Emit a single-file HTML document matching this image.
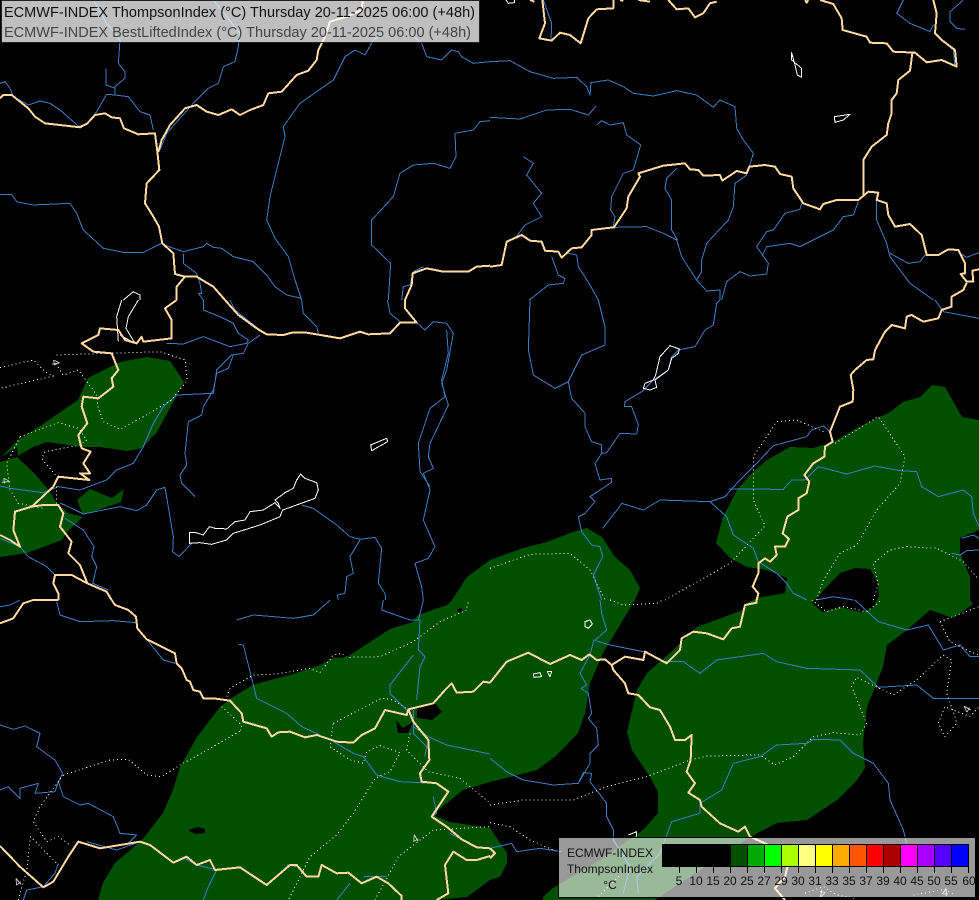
<!DOCTYPE html>
<html><head><meta charset="utf-8"><title>ECMWF-INDEX ThompsonIndex</title>
<style>
html,body{margin:0;padding:0;background:#000;width:979px;height:900px;overflow:hidden}
svg{display:block}
.g polygon{fill:#005000;stroke:none;shape-rendering:crispEdges}
.h polygon{fill:#000;stroke:none;shape-rendering:crispEdges}
polyline,.l polygon{fill:none;vector-effect:non-scaling-stroke;stroke-linejoin:round;shape-rendering:crispEdges}
.r polyline{stroke:#3d7dc4;stroke-width:1}
.d polyline{stroke:#fff;stroke-width:1;stroke-dasharray:1 3}
.b polyline{stroke:#ffd9a0;stroke-width:2}
.l polygon,.l polyline{stroke:#fff;stroke-width:1}
text{font-family:"Liberation Sans",Arial,sans-serif}
.n{font-size:11px;fill:#ddd}
</style></head><body>
<svg width="979" height="900" viewBox="0 0 979 900" xmlns="http://www.w3.org/2000/svg">
<rect width="979" height="900" fill="#000"/>
<g class="g">
<polygon points="98,900 103,883 115,863 142,840 163,813 173,790 180,767 197,737 220,707 233,697 253,685 263,682 290,675 320,665 333,658 347,657 370,642 390,629 413,622 418,615 447,605 452,600 467,577 490,560 523,548 547,542 573,532 587,528 602,537 615,557 630,570 640,588 635,600 617,630 603,653 590,683 585,713 578,733 557,755 537,770 510,777 490,782 463,790 447,803 433,815 450,822 490,828 507,853 507,863 500,877 490,880 467,897 437,900"/>
<polygon points="716,543 723,517 737,490 753,472 767,460 790,447 813,448 833,442 857,428 890,412 903,402 920,397 932,385 945,387 962,417 979,420 979,530 960,538 960,553 970,577 970,600 973,604 953,618 930,610 907,630 887,645 883,667 867,707 863,743 865,768 857,780 837,800 807,820 777,823 750,837 655,900 543,900 543,897 553,888 600,860 643,830 658,813 658,792 650,777 632,750 627,732 637,690 647,673 670,653 697,627 743,610 747,603 757,598 785,593 787,578 767,570 747,567 730,558"/>
<polygon points="0,458 18,440 40,426 78,400 88,378 120,362 147,357 170,361 184,382 170,408 157,432 142,448 127,451 100,447 82,447 47,442 33,447 18,456 17,447"/>
<polygon points="0,462 17,457 33,472 47,488 57,503 68,513 83,517 67,532 62,540 27,553 0,557"/>
<polygon points="77,500 90,489 112,498 124,489 121,502 83,515"/>
</g>
<g class="h">
<polygon points="812,603 823,591 840,573 855,568 870,569 878,583 879,596 873,608 860,612 840,607 823,612"/>
<polygon points="417,708 435,703 442,712 432,720 417,718"/>
<polygon points="396,720 403,728 413,722 408,733 398,733"/>
<polygon points="188,830 198,827 205,829 205,833 195,834"/>
<polygon points="457,609 462,608 463,612 458,612"/>
</g>
<!-- rivers -->
<g class="r">
<g transform="scale(.33333)">
<polyline points="0,250 15,245 30,265 40,290 85,315 120,303 150,310 180,330 235,378 260,375 290,335 320,283 345,285 385,290 420,335 450,345 460,390"/>
<polyline points="480,450 500,400 580,310 625,265 655,250 670,200 705,185 715,140 720,100 640,0"/>
<polyline points="360,120 355,190 375,215 375,235 345,260 345,285"/>
<polyline points="318,205 318,255 345,265"/>
<polyline points="280,0 320,70 360,120"/>
<polyline points="0,583 35,583 50,605 100,615 210,610 230,640 250,690 310,745 370,757 430,757 485,730"/>
<polyline points="487,733 550,755 610,740 620,730 640,742 665,745 700,770 760,785 800,825 825,860 860,885 905,895"/>
<polyline points="550,760 550,790 590,820 600,850 605,880 595,880 610,900"/>
<polyline points="905,900 885,840 865,770 825,715 800,660 810,590 830,510 855,410 850,380 900,310 1000,240 1035,170 1065,150 1095,165 1120,120 1150,100"/>
<polyline points="1165,900 1172,790 1115,735 1115,660 1180,590 1200,520 1240,495 1300,490 1350,505 1368,470 1365,400 1420,390 1440,365 1470,362"/>
<polyline points="1230,100 1265,130 1280,170 1325,180 1355,150 1375,155 1385,170 1420,190 1470,185"/>
<polyline points="1205,900 1210,860 1230,855 1240,815 1270,800"/>
</g>
<g transform="translate(490,0) scale(.33333)">
<polyline points="0,185 60,182 120,215 190,235 260,232 290,260 300,285 303,248 355,240 400,260 430,280 490,288 560,272 620,285 670,322 690,300 735,320 740,385 760,420 790,460 772,520"/>
<polyline points="0,352 90,357 170,330 240,328 295,345 318,318"/>
<polyline points="320,375 335,362 360,375 400,368 410,405 452,435 430,510 400,520 365,590 362,630 375,650 370,680"/>
<polyline points="100,470 130,490 110,525 155,580 130,610 155,650 105,675 75,715"/>
<polyline points="372,682 470,680 520,700 560,720 575,770 620,840 650,873 690,870 690,900"/>
<polyline points="560,505 530,535 525,565 545,600 545,690 562,720"/>
<polyline points="770,525 735,550 730,620 715,660 650,730 635,780 635,815 620,840"/>
<polyline points="695,900 710,845 750,815 780,828 830,822 835,790 800,740 830,695 850,690 885,640 930,628 935,610"/>
<polyline points="815,770 830,740 900,730 930,740 1030,690 1060,650 1090,645 1105,605"/>
<polyline points="1160,600 1160,660 1190,730 1200,770 1260,850 1330,900"/>
<polyline points="1200,760 1255,790 1290,785 1305,765"/>
<polyline points="1410,760 1430,772 1467,758"/>
<polyline points="185,770 205,825 225,835 220,850 175,855 118,900"/>
<polyline points="235,760 260,765 265,800 300,855 325,900"/>
<polyline points="1240,0 1220,40 1260,70 1320,95 1330,75"/>
<polyline points="1420,0 1380,35 1380,65 1400,85 1425,88"/>
<polyline points="160,0 185,70 183,120"/>
<polyline points="1355,120 1390,150 1395,200"/>
</g>
<g transform="translate(0,300) scale(.33333)">
<polyline points="610,0 610,30 660,50 700,70 715,100 745,120 740,130 690,140 610,110 550,132 500,130"/>
<polyline points="780,105 745,130 730,160 695,165 650,210 640,280 530,285 490,320 460,370 430,440 400,490 350,510 320,540 240,570 175,560 130,578 30,565 0,558"/>
<polyline points="700,165 685,205 650,220 640,270 610,320 605,345 565,365 555,460 560,495 540,525 545,550 585,590"/>
<polyline points="690,0 705,30 780,90"/>
<polyline points="905,0 910,40 950,80 955,100"/>
<polyline points="1162,0 1170,40 1200,65"/>
<polyline points="1250,68 1275,90 1300,65 1340,70 1360,100 1340,210 1325,250 1345,315 1290,430 1285,470 1300,505 1270,520 1290,570 1270,660 1305,740 1285,775 1245,790 1265,860 1270,900"/>
<polyline points="1340,90 1345,160 1325,240 1335,290 1290,325 1255,430 1260,515 1290,560"/>
<polyline points="905,615 940,625 1010,675 1050,710 1080,718 1125,712 1145,745 1135,850 1155,880 1157,900"/>
<polyline points="1080,720 1050,770 1060,820 1040,830 1035,880 1012,885 1015,900"/>
<polyline points="180,610 195,615 250,642 360,620 410,632 440,615 470,570 495,562 520,710 518,755 537,770 575,730"/>
<polyline points="195,655 250,690 282,740 275,770 290,800 278,850 325,870"/>
<polyline points="0,715 60,740 85,770 140,800 165,825"/>
</g>
<g transform="translate(490,300) scale(.33333)">
<polyline points="120,0 115,150 130,225 195,265 235,245 275,165 345,135 345,80 325,0"/>
<polyline points="235,245 245,295 285,340 285,380 305,425 335,435 335,460 315,490 330,540 365,535 365,547 300,590 315,605 285,640 265,650 275,695 305,735 330,740 338,770 310,825 335,900"/>
<polyline points="335,460 350,458 390,400 440,402 445,375 425,320 403,320 405,305 455,275 490,240 535,210 545,170 565,150 615,140 645,90 670,75 680,10 690,0"/>
<polyline points="338,685 385,625 395,610 460,630 510,600 660,605 705,590 745,545 800,490 850,437 950,410 965,390 1000,378 1020,395"/>
<polyline points="660,605 710,650 730,705 790,745 805,785 860,820 890,850 910,880 950,900"/>
<polyline points="715,567 880,568 905,540 945,540 985,500 1070,522 1155,498 1230,512 1280,515 1295,560 1345,590 1420,570 1445,590 1450,640 1467,680"/>
<polyline points="1415,715 1450,705 1467,715"/>
<polyline points="1385,760 1410,765 1430,752 1467,750"/>
<polyline points="1335,0 1360,35 1467,55"/>
<polyline points="980,900 1030,890 1090,900"/>
</g>
<g transform="translate(0,600) scale(.33333)">
<polyline points="0,20 30,15 60,0"/>
<polyline points="170,5 180,45 240,65 340,62 408,68"/>
<polyline points="440,118 490,180 525,190"/>
<polyline points="710,60 760,45 880,55 940,45 985,5 990,0"/>
<polyline points="715,133 730,135 745,195 770,295 820,320 860,340 905,380 960,405"/>
<polyline points="1150,0 1145,30 1230,60 1260,60 1255,150 1275,170 1260,200 1250,300"/>
<polyline points="1270,0 1255,60"/>
<polyline points="1240,165 1170,255 1170,280 1220,330"/>
<polyline points="0,375 40,388 75,378 120,400 110,440 165,480 188,520 175,545 190,590 240,615 265,610 340,650 360,700 410,705 385,730"/>
<polyline points="0,570 25,560 60,595 60,565 115,550 105,580 165,575 175,545"/>
<polyline points="260,725 350,750 420,725"/>
<polyline points="1000,425 1060,460 1090,470 1130,525 1200,545 1300,550"/>
<polyline points="545,770 590,795 650,810 720,800 800,855"/>
<polyline points="650,810 625,860 610,900"/>
<polyline points="860,795 890,800"/>
<polyline points="1090,830 1160,830"/>
<polyline points="1050,850 1010,900"/>
<polyline points="1240,380 1285,410 1340,435 1470,462"/>
<polyline points="1240,330 1240,400 1280,440 1275,470"/>
<polyline points="1300,590 1310,640 1295,650"/>
<polyline points="1350,700 1410,730"/>
<polyline points="175,790 165,820 130,860 80,870 70,900"/>
</g>
<g transform="translate(490,600) scale(.33333)">
<polyline points="330,0 335,40 350,90 310,125 300,165 270,220 290,255 273,265 295,280 305,340 295,355 320,385 325,435 300,460 300,490 265,550 190,555 100,540 50,515 0,475"/>
<polyline points="310,120 360,135 460,155 520,185 580,185 630,220 680,180 820,160 860,185 950,205 1110,210 1165,262 1280,255 1330,295 1467,295"/>
<polyline points="1095,0 1165,65 1250,90 1315,75 1360,150 1410,135 1440,170 1467,170"/>
<polyline points="265,550 280,518 305,520 300,545 350,610 350,650 370,690 370,720 420,800 400,880"/>
<polyline points="630,610 695,570 730,490 810,470 860,435 950,430 970,418 1050,420 1090,460 1150,490 1195,550 1200,600 1240,690 1250,730"/>
<polyline points="630,600 630,640 545,665 510,760 440,830 445,880"/>
<polyline points="0,745 65,730 80,755 150,745 215,755"/>
</g>
</g>
<!-- dotted isolines -->
<g class="d">
<g transform="translate(0,300) scale(.33333)">
<polyline points="0,203 100,180 135,215 160,228 0,265"/>
<polyline points="170,165 480,155 555,180 562,240 515,300 430,350 360,388 310,365 295,325 290,285 235,210 190,225 165,190"/>
<polyline points="60,410 175,368 235,385 260,420 240,435 135,455 125,475 170,530"/>
<polyline points="60,410 20,490 30,570 55,610 130,625"/>
<polyline points="170,560 170,610"/>
</g>
<g transform="translate(490,300) scale(.33333)">
<polyline points="525,900 720,790 825,678 790,600 790,470 860,365 920,360 1000,395"/>
<polyline points="1035,430 1165,350 1245,470 1230,550 1160,630 1100,735 1050,760 1000,840 980,900"/>
<polyline points="0,805 120,763 240,760 300,810 340,890 345,900"/>
<polyline points="1150,900 1165,850 1150,790 1200,750 1250,740 1340,745 1420,785 1467,840"/>
</g>
<g transform="translate(490,600) scale(.33333)">
<polyline points="360,0 400,15 500,10 520,0"/>
<polyline points="965,0 1010,35 1060,20 1130,35 1175,0"/>
<polyline points="0,615 100,600 250,600 350,560 470,530 600,480 650,468 810,465 855,495 910,470 970,410 1030,398 1110,405 1130,370 1085,260 1100,232 1210,285 1280,240 1360,165 1385,180 1370,280 1395,350 1400,370 1365,410 1345,370 1365,320 1440,350 1467,320"/>
<polyline points="1350,65 1467,20"/>
<polyline points="1350,65 1380,125 1440,155 1467,165"/>
<polyline points="0,668 60,680 120,720 190,750"/>
<polyline points="325,890 390,825"/>
<polyline points="945,880 1000,860 1040,885 1100,895"/>
<polyline points="1270,885 1365,868 1395,885"/>
</g>
<g transform="translate(0,600) scale(.33333)">
<polyline points="190,525 330,480 385,478 440,525 485,530 540,495 640,440 725,390"/>
<polyline points="665,320 725,375 720,395"/>
<polyline points="680,290 690,265 760,225 830,222 930,205 960,218 1000,165 1025,160 1040,172 1140,170 1240,125 1320,65 1400,30 1405,0"/>
<polyline points="1000,370 1145,295 1180,300 1225,330"/>
<polyline points="1000,370 990,440 1050,480 1090,490 1100,455 1140,437 1200,458 1170,515 1125,535 1060,640 1010,705 930,770 865,900"/>
<polyline points="1230,400 1220,450 1285,515 1380,535 1470,610"/>
<polyline points="1125,900 1195,770 1300,690 1470,680"/>
<polyline points="190,525 120,620 100,665 140,725 175,710 210,735"/>
<polyline points="55,900 80,810 92,710 175,795"/>
</g>
</g>
<!-- lakes -->
<g class="l">
<g transform="translate(0,300) scale(.33333)">
<polygon points="568,697 585,697 610,705 628,680 645,685 660,685 680,687 705,665 735,660 750,635 790,630 825,608 840,625 835,610 825,600 855,578 880,565 890,540 902,522 915,535 950,548 955,570 945,595 890,615 848,630 840,650 780,675 700,700 680,720 635,733 600,728 568,730"/>
<polygon points="1112,435 1160,415 1163,425 1115,452"/>
<polyline points="365,0 350,50 355,125"/>
<polyline points="415,0 385,50 378,85 405,130 360,105"/>
</g>
<g transform="scale(.33333)">
<polyline points="370,900 400,875 420,885 420,900"/>
</g>
<g transform="translate(490,300) scale(.33333)">
<polygon points="540,137 568,147 565,160 545,175 535,210 495,240 500,262 480,270 460,265 465,250 490,240 497,225 510,170"/>
</g>
<g transform="translate(490,0) scale(.33333)">
<polygon points="905,158 905,180 935,205 935,232 922,225 915,195"/>
<polygon points="1033,350 1080,343 1060,360 1035,367"/>
<polyline points="48,0 55,10 73,8 73,0"/>
</g>
<g transform="translate(490,600) scale(.33333)">
<polygon points="285,65 300,60 307,72 295,85 285,80"/>
<polygon points="130,222 150,218 155,230 132,232"/>
<polygon points="172,215 185,215 180,230"/>
<polyline points="415,705 440,695 440,710"/>
</g>
</g>
<!-- borders -->
<g class="b">
<g transform="scale(.33333)">
<polyline points="0,295 10,285 35,285 60,305 85,325 105,350 135,370 180,375 240,382 262,370 285,345 315,340 335,352 360,355 372,385 415,403 465,400 472,455 478,510 440,550 435,610 460,650 477,680 487,730 520,760 525,822 555,830 590,830 640,860 675,900"/>
<polyline points="590,830 555,830 530,860 530,900"/>
<polyline points="1088,0 1085,30 1040,50 990,65 975,110 955,150 950,180 925,212 890,225 845,275 805,280 790,315 750,330 720,345 695,328 655,345 620,335 590,315 555,325 510,375 485,420 475,455"/>
<polyline points="1215,900 1235,855 1238,820 1280,805 1330,815 1405,815 1430,800 1470,797"/>
</g>
<g transform="translate(490,0) scale(.33333)">
<polyline points="0,800 35,795 50,725 95,705 120,722 155,725 165,752 205,755 215,773 245,745 275,742 305,705 305,690 345,685 372,682 410,625 415,590 450,530 445,520 520,497 585,490 600,508 625,510 640,527 690,525 697,542 740,513 770,520 778,500 825,495 855,500 870,522 905,530 910,565 940,610 990,628 1000,612 1040,600 1105,600 1135,575 1165,578 1160,600 1190,610 1195,645 1215,680 1260,672 1295,705 1310,765 1345,765 1375,748 1405,750 1425,790 1425,820 1412,822 1430,845 1450,845 1447,812 1467,808"/>
<polyline points="1430,848 1420,870 1385,890 1385,900"/>
<polyline points="1120,590 1120,480 1145,440 1190,405 1195,370 1205,340 1205,300 1220,280 1225,240 1260,212 1267,160"/>
<polyline points="990,0 1030,12 1055,55 1058,90 1130,110 1140,128 1190,130 1210,155 1275,158 1310,187 1355,180 1400,200 1395,150 1355,120 1335,100 1340,40 1330,0"/>
<polyline points="157,0 165,70 148,115 185,122 210,98 240,105 272,130 295,55 320,28 370,25 370,0"/>
<polyline points="535,0 560,28 595,25 615,52 640,40 660,10 680,5"/>
<polyline points="390,0 400,3"/>
<polyline points="445,0 480,5"/>
<polyline points="945,0 950,8 955,0"/>
<polyline points="120,0 133,5"/>
</g>
<g transform="translate(0,300) scale(.33333)">
<polyline points="675,0 715,45 770,85 800,103 850,105 880,97 920,98 1020,115 1080,95 1105,103 1170,100 1200,68 1250,68 1215,25 1215,0"/>
<polyline points="530,0 495,25 515,60 515,115 430,125 425,110 410,130 375,120 355,90 300,85 295,105 245,130 280,155 335,160 355,210 335,235 340,260 295,295 250,290 245,320 262,370 235,405 245,445 272,455 250,490 270,520 240,520 268,540 175,530 160,560 95,620 45,635 40,690 60,740 30,720 0,705"/>
<polyline points="95,620 130,615 175,615 190,640 180,680 215,725 205,760 240,795 262,850 320,875 335,900"/>
<polyline points="262,850 215,825 165,825 160,850 175,880 175,900"/>
</g>
<g transform="translate(490,300) scale(.33333)">
<polyline points="800,900 805,880 788,860 805,820 805,790 825,775 840,785 860,765 855,740 885,740 897,717 878,700 892,650 925,630 925,595 950,580 958,545 943,525 970,490 1003,470 1005,440 1028,425 1020,395 1030,370 1050,320 1088,305 1090,270 1082,225 1095,210 1130,180 1150,178 1155,150 1185,95 1205,75 1245,85 1250,50 1265,45 1300,65 1345,55 1355,30 1385,20 1385,0"/>
</g>
<g transform="translate(0,600) scale(.33333)">
<polyline points="175,0 100,0 70,10 40,55 0,70"/>
<polyline points="335,0 345,15 385,30 408,50 412,85 440,118 525,160 530,190 545,205 560,240 570,245 580,270 600,275 610,295 640,295 690,302 725,340 730,365 800,385 815,410 835,397 870,395 915,412 950,405 1010,425 1060,428 1085,405 1125,385 1155,330 1220,345 1225,328 1300,310 1335,270 1355,250 1370,278 1420,275 1450,245 1470,248"/>
<polyline points="1225,328 1240,365 1285,420 1288,480 1260,520 1265,545 1310,550 1345,575 1335,590 1295,650 1340,680 1385,718 1430,742 1470,745"/>
<polyline points="0,738 60,800 130,862 160,845 205,770 235,725 300,745 420,725 450,735 520,788 560,770 590,795 630,780 645,810 720,802 800,855 870,795 890,795 920,830 955,830 965,795 1010,820 1045,818 1085,850 1130,830 1165,850 1205,888 1205,900"/>
<polyline points="1310,900 1345,880 1335,795 1360,755 1400,780 1430,780 1470,768"/>
</g>
<g transform="translate(490,600) scale(.33333)">
<polyline points="0,248 30,210 50,185 115,158 180,192 240,165 275,180 298,163 320,180 345,178 365,195 405,170 460,180 465,155 530,190 570,150 575,115 610,95 650,100 700,118 725,85 750,80 765,15 800,8 800,0"/>
<polyline points="365,195 370,210 405,250 415,280 445,285 480,322 510,330 540,380 555,420 585,420 605,405 602,480 590,515 615,550 595,578 630,600 635,620 690,670 745,695 765,680 780,710 825,730 900,770 885,830 855,865 885,900"/>
<polyline points="0,745 15,760 0,775"/>
</g>
</g>
<!-- contour labels -->
<text class="n" transform="translate(52,363) rotate(80)" text-anchor="middle">4</text>
<text class="n" transform="translate(2,481) rotate(85)" text-anchor="middle">4</text>
<text class="n" transform="translate(20,885) rotate(-40)" text-anchor="middle">4</text>
<text class="n" transform="translate(417,842) rotate(-30)" text-anchor="middle">4</text>
<text class="n" transform="translate(970,711) rotate(-60)" text-anchor="middle">4</text>
<text class="n" transform="translate(823,890) rotate(-170)" text-anchor="middle">4</text>
<text class="n" transform="translate(945,896)" text-anchor="middle">4</text>
<!-- title labels -->
<rect x="1.5" y="0.5" width="478" height="42" fill="#fff" fill-opacity=".75" stroke="#222" stroke-width="1"/>
<text x="4" y="17" font-size="14.5" fill="#111" textLength="471" lengthAdjust="spacing">ECMWF-INDEX ThompsonIndex (°C) Thursday 20-11-2025 06:00 (+48h)</text>
<text x="4" y="37" font-size="14.5" fill="#444" textLength="467" lengthAdjust="spacing">ECMWF-INDEX BestLiftedIndex (°C) Thursday 20-11-2025 06:00 (+48h)</text>
<!-- legend -->
<rect x="558.5" y="837.5" width="417" height="60" fill="#fff" fill-opacity=".6" stroke="#000" stroke-width="1"/>
<g font-size="12" fill="#111" text-anchor="middle">
<text x="610" y="857">ECMWF-INDEX</text>
<text x="610" y="873">ThompsonIndex</text>
<text x="610" y="889">°C</text>
</g>
<g stroke="#000" stroke-width="1" shape-rendering="crispEdges">
<rect x="662.5" y="844.5" width="17" height="22" fill="#000"/>
<rect x="679.5" y="844.5" width="17" height="22" fill="#000"/>
<rect x="696.5" y="844.5" width="17" height="22" fill="#000"/>
<rect x="713.5" y="844.5" width="17" height="22" fill="#000"/>
<rect x="730.5" y="844.5" width="17" height="22" fill="#005000"/>
<rect x="747.5" y="844.5" width="17" height="22" fill="#00aa00"/>
<rect x="764.5" y="844.5" width="17" height="22" fill="#00ff00"/>
<rect x="781.5" y="844.5" width="17" height="22" fill="#aaff00"/>
<rect x="798.5" y="844.5" width="17" height="22" fill="#ffff80"/>
<rect x="815.5" y="844.5" width="17" height="22" fill="#ffff00"/>
<rect x="832.5" y="844.5" width="17" height="22" fill="#ffaa00"/>
<rect x="849.5" y="844.5" width="17" height="22" fill="#ff5500"/>
<rect x="866.5" y="844.5" width="17" height="22" fill="#ff0000"/>
<rect x="883.5" y="844.5" width="17" height="22" fill="#aa0000"/>
<rect x="900.5" y="844.5" width="17" height="22" fill="#ff00ff"/>
<rect x="917.5" y="844.5" width="17" height="22" fill="#aa00ff"/>
<rect x="934.5" y="844.5" width="17" height="22" fill="#5500ff"/>
<rect x="951.5" y="844.5" width="17" height="22" fill="#0000ff"/>
<path fill="none" d="M679.5 867v6M696.5 867v6M713.5 867v6M730.5 867v6M747.5 867v6M764.5 867v6M781.5 867v6M798.5 867v6M815.5 867v6M832.5 867v6M849.5 867v6M866.5 867v6M883.5 867v6M900.5 867v6M917.5 867v6M934.5 867v6M951.5 867v6M968.5 867v6"/>
</g>
<g font-size="12" fill="#111" text-anchor="middle">
<text x="679" y="885">5</text><text x="696" y="885">10</text><text x="713" y="885">15</text><text x="730" y="885">20</text><text x="747" y="885">25</text><text x="764" y="885">27</text><text x="781" y="885">29</text><text x="798" y="885">30</text><text x="815" y="885">31</text><text x="832" y="885">33</text><text x="849" y="885">35</text><text x="866" y="885">37</text><text x="883" y="885">39</text><text x="900" y="885">40</text><text x="917" y="885">45</text><text x="934" y="885">50</text><text x="951" y="885">55</text><text x="969" y="885">60</text>
</g>
</svg>
</body></html>
